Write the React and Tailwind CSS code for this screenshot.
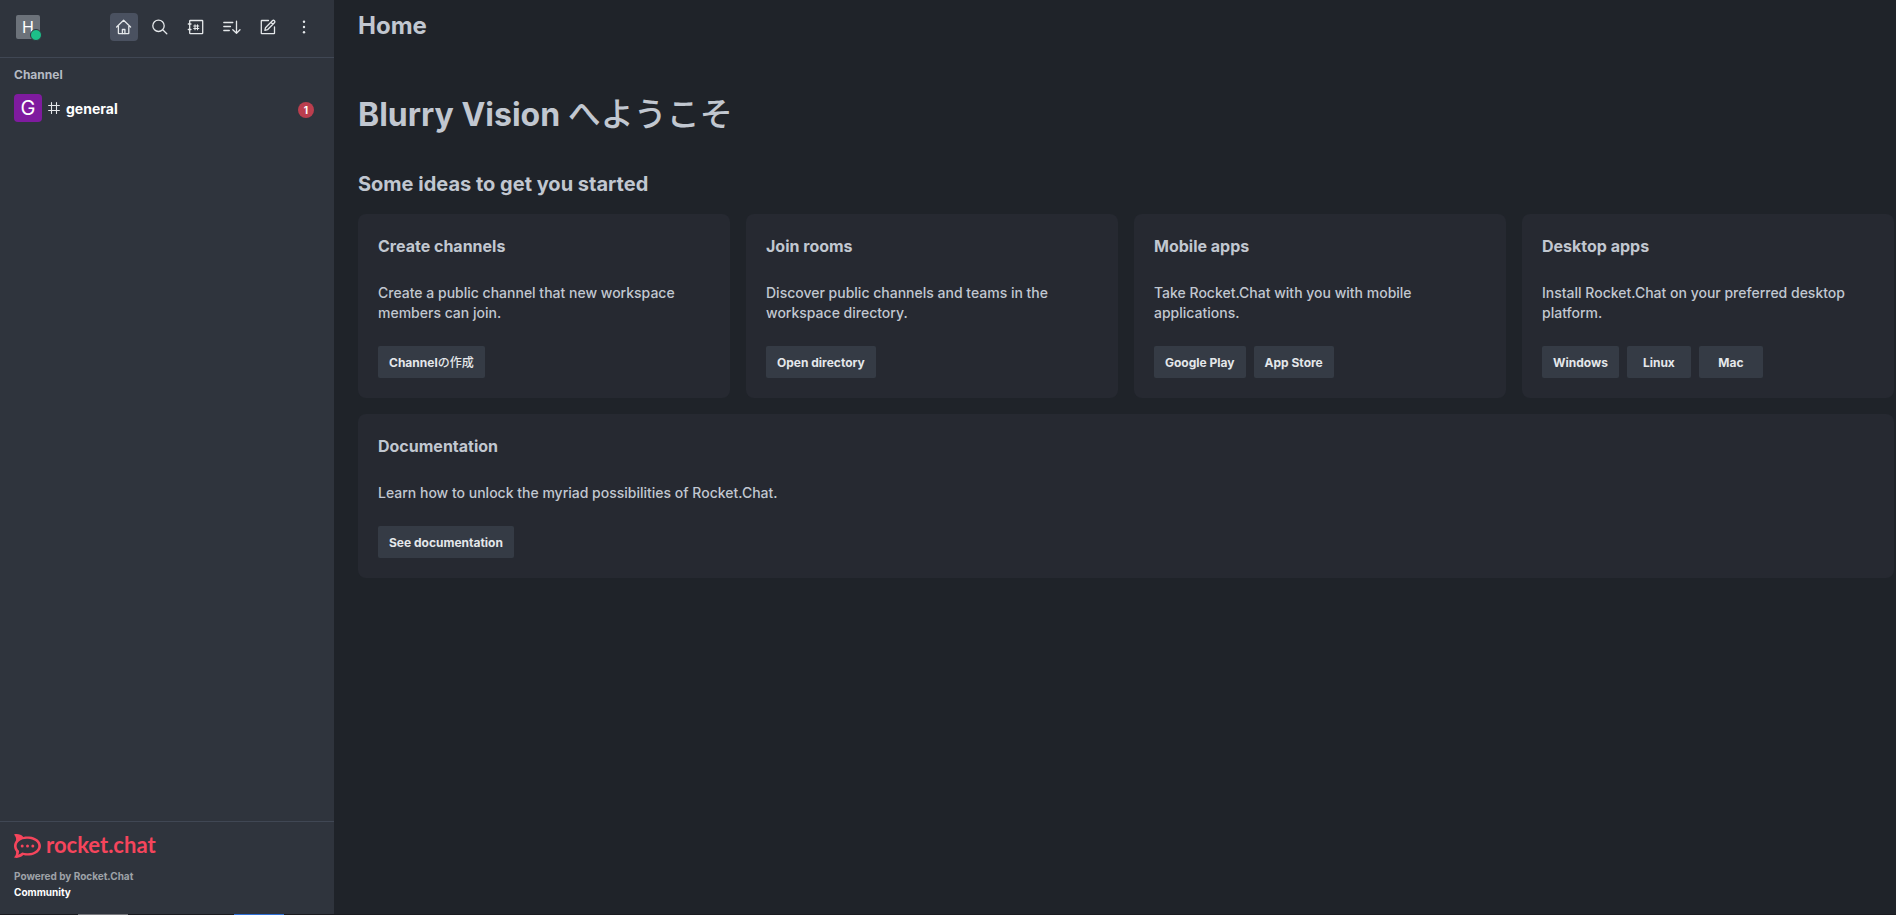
const ICON = {
  width: 20,
  height: 20,
  viewBox: '0 0 20 20',
  fill: 'none',
  stroke: 'currentColor',
  strokeWidth: 1.3,
  strokeLinecap: 'round',
  strokeLinejoin: 'round',
  'aria-hidden': true,
};

const HomeIcon = () => (
  <svg {...ICON}>
    <path d="M2.600 10 9.600 3.300 16.600 10M4.400 9v7.200q0 .5.5.5h9.400q.5 0 .5-.500V9" />
    <path d="M8.400 16.500v-4h2.500v4" />
  </svg>
);

const SearchIcon = () => (
  <svg {...ICON}>
    <circle cx="8.500" cy="8.800" r="5.700" />
    <path d="m12.700 12.800 4.100 4" />
  </svg>
);

const DirectoryIcon = () => (
  <svg {...ICON}>
    <rect x="3.700" y="3.500" width="13" height="13.200" rx="0.600" />
    <path d="M2.300 7h2.700M2.300 12.500h2.700" />
    <path strokeWidth="1.100" d="M9 7.700v5M11.500 7.700v5M7.700 9h5.100M7.700 11.500h5.100" />
  </svg>
);

const SortIcon = () => (
  <svg {...ICON}>
    <path d="M1.800 5.500h9M1.800 9.500h6.700M1.800 13.500h5.500" />
    <path d="M14.500 4.200v12M10.800 12.700l3.700 3.600 3.500-3.600" />
  </svg>
);

const EditIcon = () => (
  <svg {...ICON}>
    <path d="M10.500 3.500H3.800q-.5 0-.5.500v12.200q0 .5.5.5h12.200q.5 0 .5-.500V9.800" />
    <path d="m7.500 10.700 6.900-6.900c.7-.7 1.400-.6 2 0s.7 1.300 0 2l-6.900 6.900-2.600.6ZM12.900 5.300l2 2" />
  </svg>
);

const KebabIcon = () => (
  <svg {...ICON} fill="currentColor" stroke="none">
    <circle cx="10" cy="4.700" r="1.200" />
    <circle cx="10" cy="10" r="1.200" />
    <circle cx="10" cy="15.300" r="1.200" />
  </svg>
);

const HashIcon = () => (
  <svg {...ICON} width="12" height="12" viewBox="0 0 12 12" strokeWidth="1.100">
    <path d="M3.500 0.600v10.800M8.500 0.600v10.800M0.600 3.500h10.800M0.600 8.500h10.800" />
  </svg>
);

const RocketLogo = () => (
  <svg width="27" height="24" viewBox="0 0 27 24" fill="none" aria-hidden="true">
    <path
      fill="#f5455c"
      fillRule="evenodd"
      d="M0 0.500C3.500-0.500 7 0.500 9.300 2.900c2-.5 4-.6 6-.4C22 3.100 27 7 27 12s-5 9-11.700 9.500c-2 .2-4 .1-6-.4C7 23.500 3.500 24.500 0 23.500 1.800 21.500 2.400 19.500 2 17.500.8 16 0 14 0 12s.8-4 2-5.500C2.400 4.500 1.800 2.500 0 .5ZM8.500 5.300C5 6.600 2.600 9 2.600 12c0 1.800.9 3.500 2.400 4.700.1 1.500-.1 2.900-.8 4 1.500-.3 2.900-1 4-2.100 1.800.5 3.700.8 5.700.7 6-.2 10.400-3.300 10.400-7.300s-4.400-7-10.400-7.300c-1.900-.1-3.700.1-5.400.6Z"
    />
    <g fill="#f5455c">
      <circle cx="8.200" cy="12" r="1.500" />
      <circle cx="13.500" cy="12" r="1.500" />
      <circle cx="18.800" cy="12" r="1.500" />
    </g>
  </svg>
);

const TOOLS = [
  { label: 'Home', Icon: HomeIcon, active: true },
  { label: 'Search', Icon: SearchIcon },
  { label: 'Directory', Icon: DirectoryIcon },
  { label: 'Display', Icon: SortIcon },
  { label: 'Create new', Icon: EditIcon },
  { label: 'Options', Icon: KebabIcon },
];

const CARDS = [
  {
    title: 'Create channels',
    body: 'Create a public channel that new workspace members can join.',
    actions: [<>Channel<span className="font-medium">の作成</span></>],
  },
  {
    title: 'Join rooms',
    body: 'Discover public channels and teams in the workspace directory.',
    actions: ['Open directory'],
  },
  {
    title: 'Mobile apps',
    body: 'Take Rocket.Chat with you with mobile applications.',
    actions: ['Google Play', 'App Store'],
  },
  {
    title: 'Desktop apps',
    body: 'Install Rocket.Chat on your preferred desktop platform.',
    actions: ['Windows', 'Linux', 'Mac'],
  },
  {
    title: 'Documentation',
    body: 'Learn how to unlock the myriad possibilities of Rocket.Chat.',
    actions: ['See documentation'],
    wide: true,
  },
];

function Card({ title, body, actions, wide }) {
  return (
    <section className={`flex flex-col rounded-lg bg-[#262931] p-5 ${wide ? 'col-span-full' : ''}`}>
      <h3 className="text-base leading-6 font-bold">{title}</h3>
      <p className="mt-[25px] text-sm leading-5 font-medium">{body}</p>
      <div className="mt-[23px] flex gap-2">
        {actions.map((action, i) => (
          <button
            key={i}
            type="button"
            className="h-8 min-w-16 rounded-xs bg-[#353b45] px-[11px] pt-0.5 text-xs leading-4 font-bold text-[#e4e7ea]"
          >
            {action}
          </button>
        ))}
      </div>
    </section>
  );
}

function Sidebar() {
  return (
    <aside className="flex w-[334px] shrink-0 flex-col bg-[#2f343d]">
      <header className="flex h-[58px] items-center justify-between border-b border-[#404754] px-4 pb-[3px]">
        <button type="button" aria-label="User menu" className="relative size-6 rounded-xs bg-[#6c727a] text-base leading-6 text-white">
          H
          <span className="absolute -right-0.5 -bottom-0.5 size-3 rounded-full border border-[#2f343d] bg-[#1cbf89]" />
        </button>
        <div className="flex gap-2">
          {TOOLS.map(({ label, Icon, active }) => (
            <button
              key={label}
              type="button"
              aria-label={label}
              className={`flex size-7 items-center justify-center rounded-sm text-[#e4e7ea] ${active ? 'bg-[#4a5160]' : ''}`}
            >
              <Icon />
            </button>
          ))}
        </div>
      </header>
      <nav className="grow">
        <h2 className="px-[14px] pt-[9px] text-xs leading-4 font-bold text-[#b5bac3]">Channel</h2>
        <a href="#general" className="mt-[11px] flex h-7 items-center pr-5 pl-[14px]">
          <span className="flex size-7 items-center justify-center rounded-sm bg-[#7f1b9f] text-xl text-white">G</span>
          <span className="ml-1.5 text-[#e4e7ea]"><HashIcon /></span>
          <span className="ml-1.5 grow pt-0.5 text-sm leading-5 font-bold text-white">general</span>
          <span className="mt-1 size-4 rounded-full bg-[#bb3e4e] text-center text-[10px] leading-4 font-bold text-white">1</span>
        </a>
      </nav>
      <footer className="border-t border-[#404754] px-[14px] pt-3 pb-[14px]">
        <a href="#rocket" className="flex h-6 items-center gap-[5px] text-[#f5455c]">
          <RocketLogo />
          <span className="pb-0.5 font-['Lato'] text-[22px] leading-6 font-bold">rocket.chat</span>
        </a>
        <p className="mt-[10px] text-[10px] leading-4 font-bold text-[#9ea2a8]">Powered by Rocket.Chat</p>
        <p className="text-[10px] leading-4 font-bold text-white">Community</p>
      </footer>
    </aside>
  );
}

export default function App() {
  return (
    <div className="flex h-screen flex-col overflow-hidden bg-[#1f2329] font-['Inter','Noto_Sans_CJK_JP',sans-serif] text-[#c1c7d0]">
      <div className="flex min-h-0 grow">
        <Sidebar />
        <main className="min-w-0 grow pl-6 pr-[2px]">
          <h1 className="pt-[10px] text-2xl leading-8 font-bold">Home</h1>
          <h2 className="mt-[52px] text-[32px] leading-10 font-bold">
            Blurry Vision <span className="text-[33px] font-medium">へようこそ</span>
          </h2>
          <h3 className="mt-[35px] text-xl leading-7 font-bold">Some ideas to get you started</h3>
          <div className="mt-4 grid grid-cols-4 gap-4">
            {CARDS.map((card) => (
              <Card key={card.title} {...card} />
            ))}
          </div>
        </main>
      </div>
      <div className="flex h-px shrink-0 bg-[#1a1b20]">
        <span className="ml-[78px] w-[50px] bg-[#77777c]" />
        <span className="ml-[106px] w-[50px] bg-[#2f6fd6]" />
      </div>
    </div>
  );
}
